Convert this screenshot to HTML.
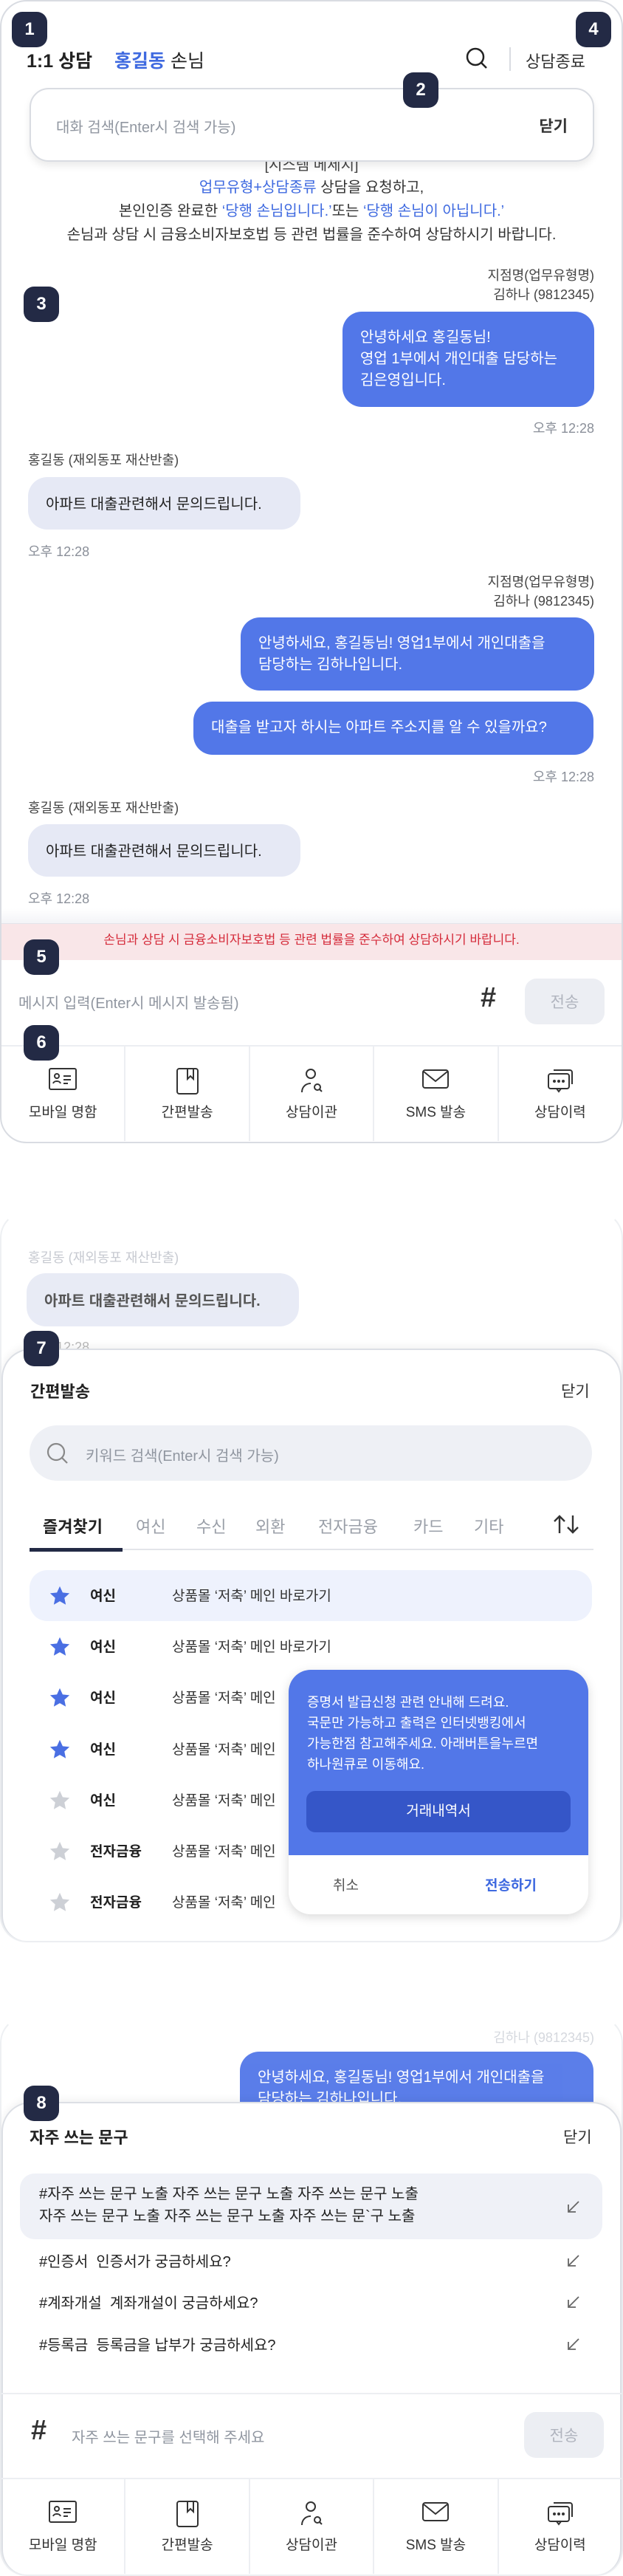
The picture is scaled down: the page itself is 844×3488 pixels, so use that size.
<!DOCTYPE html>
<html><head><meta charset="utf-8"><style>
*{margin:0;padding:0;box-sizing:border-box}
body{width:844px;height:3488px;position:relative;background:#fff;font-family:"Liberation Sans","Noto Sans CJK KR",sans-serif;color:#222;overflow:hidden}
.a{position:absolute;white-space:nowrap}
.frame{position:absolute;left:0;width:844px;border:2px solid #d9dce2;border-radius:36px;background:#fff;overflow:hidden}
.badge{position:absolute;width:48px;height:48px;border-radius:14px;background:#232a45;color:#fff;font-size:24px;font-weight:bold;display:flex;align-items:center;justify-content:center;z-index:20}
.bubble-b{position:absolute;background:#5277e8;color:#fff;border-radius:26px;font-size:20px;line-height:29px;padding:0 0 0 24px}
.bubble-g{position:absolute;background:#e6e9f5;color:#222;border-radius:26px;font-size:20px}
.time{font-size:18px;color:#8a8f99}
.nav{position:absolute;left:0;width:840px;height:130px;border-top:2px solid #eceef2;display:flex}
.nav div{flex:1;border-right:2px solid #eceef2;position:relative;text-align:center}
.nav div:last-child{border-right:none}
.nav svg{position:absolute;left:50%;transform:translateX(-50%);top:28px}
.nav span{position:absolute;left:0;right:0;top:74px;font-size:19px;color:#333}
.send{position:absolute;width:108px;height:62px;border-radius:16px;background:#eceef3;color:#b0b4be;font-size:21px;display:flex;align-items:center;justify-content:center}
.row{position:absolute;left:40px;width:762px;height:69px}
.row .cat{position:absolute;left:82px;top:20px;font-size:19px;font-weight:bold}
.row .tt{position:absolute;left:193px;top:20px;font-size:19px;color:#333}
.row svg{position:absolute;left:26px;top:20px}
.fr{position:absolute;left:27px;width:789px;font-size:20px;color:#222}
.fr svg{position:absolute;right:30px}
.hash{position:absolute;font-size:38px;font-weight:bold;color:#333}
</style></head><body>

<!-- FRAME 1 -->
<div class="frame" style="top:0;height:1548px"></div>
<div class="badge" style="left:16px;top:16px">1</div>
<div class="badge" style="left:780px;top:16px">4</div>
<div class="a" style="left:36px;top:63px;font-size:25px;font-weight:bold">1:1 상담</div>
<div class="a" style="left:155px;top:63px;font-size:25px"><b style="color:#3f6ae0">홍길동</b> 손님</div>
<svg class="a" style="left:630px;top:63px" width="32" height="32" viewBox="0 0 32 32"><circle cx="14" cy="14" r="11" fill="none" stroke="#222" stroke-width="2.5"/><line x1="22" y1="22" x2="29" y2="29" stroke="#222" stroke-width="2.5"/></svg>
<div class="a" style="left:690px;top:64px;width:2px;height:32px;background:#d9dce2"></div>
<div class="a" style="left:712px;top:66px;font-size:22px;color:#333">상담종료</div>

<div class="a" style="left:0;top:207px;width:844px;text-align:center;font-size:20px;color:#444">[시스템 메세지]</div>
<div class="a" style="left:0;top:238px;width:844px;text-align:center;font-size:20px;line-height:32px;color:#333">
<span style="color:#3f6ae0">업무유형+상담종류</span> 상담을 요청하고,<br>
본인인증 완료한 <span style="color:#3f6ae0">‘당행 손님입니다.’</span>또는 <span style="color:#3f6ae0">‘당행 손님이 아닙니다.’</span><br>
손님과 상담 시 금융소비자보호법 등 관련 법률을 준수하여 상담하시기 바랍니다.</div>

<div class="a" style="left:40px;top:119px;width:765px;height:100px;border:2px solid #d9dce2;border-radius:26px;background:#fff;box-shadow:0 6px 10px rgba(0,0,0,.08);z-index:5">
<div class="a" style="left:34px;top:35px;font-size:20px;color:#9096a0">대화 검색(Enter시 검색 가능)</div>
<div class="a" style="right:34px;top:34px;font-size:21px;font-weight:bold;color:#333">닫기</div>
</div>
<div class="badge" style="left:546px;top:98px">2</div>
<div class="badge" style="left:32px;top:388px">3</div>

<div class="a" style="right:39px;top:360px;font-size:18px;color:#444;text-align:right;line-height:26px">지점명(업무유형명)<br>김하나 (9812345)</div>
<div class="bubble-b" style="left:464px;top:422px;width:341px;height:129px;padding-top:21px">안녕하세요 홍길동님!<br>영업 1부에서 개인대출 담당하는<br>김은영입니다.</div>
<div class="a time" style="right:39px;top:566px">오후 12:28</div>

<div class="a" style="left:38px;top:609px;font-size:18px;color:#444">홍길동 (재외동포 재산반출)</div>
<div class="bubble-g" style="left:38px;top:646px;width:369px;height:71px;padding:20px 0 0 24px">아파트 대출관련해서 문의드립니다.</div>
<div class="a time" style="left:38px;top:733px">오후 12:28</div>

<div class="a" style="right:39px;top:775px;font-size:18px;color:#444;text-align:right;line-height:26px">지점명(업무유형명)<br>김하나 (9812345)</div>
<div class="bubble-b" style="left:326px;top:836px;width:479px;height:99px;padding-top:21px">안녕하세요, 홍길동님! 영업1부에서 개인대출을<br>담당하는 김하나입니다.</div>
<div class="bubble-b" style="left:262px;top:950px;width:542px;height:72px;padding-top:21px">대출을 받고자 하시는 아파트 주소지를 알 수 있을까요?</div>
<div class="a time" style="right:39px;top:1038px">오후 12:28</div>
<div class="a" style="left:38px;top:1080px;font-size:18px;color:#444">홍길동 (재외동포 재산반출)</div>
<div class="bubble-g" style="left:38px;top:1116px;width:369px;height:71px;padding:20px 0 0 24px">아파트 대출관련해서 문의드립니다.</div>
<div class="a time" style="left:38px;top:1203px">오후 12:28</div>

<div class="a" style="left:2px;top:1230px;width:840px;height:20px;background:linear-gradient(#fff,#f3f4f7)"></div>
<div class="a" style="left:2px;top:1250px;width:840px;height:50px;background:#f9e6e8;border-top:1px solid #e3e5ea;text-align:center;font-size:17px;color:#d52b3a;line-height:44px">손님과 상담 시 금융소비자보호법 등 관련 법률을 준수하여 상담하시기 바랍니다.</div>
<div class="badge" style="left:32px;top:1272px">5</div>
<div class="a" style="left:25px;top:1342px;font-size:20px;color:#9096a0">메시지 입력(Enter시 메시지 발송됨)</div>
<div class="hash" style="left:651px;top:1330px">#</div>
<div class="send" style="left:711px;top:1325px">전송</div>
<div class="badge" style="left:32px;top:1388px">6</div>

<div class="nav" style="top:1415px;left:2px">
<div><svg width="40" height="32" viewBox="0 0 40 32" fill="none" stroke="#333" stroke-width="2"><rect x="2" y="2" width="36" height="28" rx="2"/><circle cx="12" cy="12" r="3"/><path d="M7 22c1-4 9-4 10 0M21 12h10M21 17h10M21 22h6"/></svg><span>모바일 명함</span></div>
<div><svg width="32" height="38" viewBox="0 0 32 38" fill="none" stroke="#333" stroke-width="2"><rect x="2" y="2" width="28" height="34" rx="3"/><path d="M16 2v14l4-4 4 4V2"/></svg><span>간편발송</span></div>
<div><svg width="32" height="36" viewBox="0 0 32 36" fill="none" stroke="#333" stroke-width="2"><circle cx="15" cy="9" r="6"/><path d="M3 34c0-8 6-12 12-12"/><circle cx="24" cy="27" r="4"/><path d="M27 30l3 3"/></svg><span>상담이관</span></div>
<div><svg width="38" height="32" viewBox="0 0 38 32" fill="none" stroke="#333" stroke-width="2"><rect x="2" y="4" width="34" height="24" rx="3"/><path d="M3 6l16 13 16-13"/></svg><span>SMS 발송</span></div>
<div><svg width="36" height="36" viewBox="0 0 36 36" fill="none" stroke="#333" stroke-width="2"><path d="M9 4h22a3 3 0 0 1 3 3v16"/><rect x="2" y="9" width="28" height="20" rx="3"/><path d="M13 29l3 4 3-4"/><circle cx="10" cy="19" r="1" fill="#333"/><circle cx="16" cy="19" r="1" fill="#333"/><circle cx="22" cy="19" r="1" fill="#333"/></svg><span>상담이력</span></div>
</div>

<!-- FRAME 2 -->
<div class="frame" style="top:1640px;height:990px;border-color:#eef0f3;border-top-color:#fff"></div>
<div class="a" style="left:38px;top:1689px;font-size:18px;color:#c7cad1">홍길동 (재외동포 재산반출)</div>
<div class="bubble-g" style="left:36px;top:1724px;width:369px;height:72px;padding:21px 0 0 24px;opacity:.9;font-weight:bold;color:#444">아파트 대출관련해서 문의드립니다.</div>
<div class="a time" style="left:38px;top:1810px;color:#bbb">오후 12:28</div>
<div class="a" style="left:2px;top:1826px;width:840px;height:802px;background:#fff;border:2px solid #dcdfe5;border-bottom:none;border-radius:40px 40px 34px 34px;box-shadow:0 -4px 10px rgba(0,0,0,.05)"></div>
<div class="badge" style="left:32px;top:1802px">7</div>
<div class="a" style="left:41px;top:1867px;font-size:22px;font-weight:bold">간편발송</div>
<div class="a" style="left:760px;top:1868px;font-size:21px;color:#333">닫기</div>
<div class="a" style="left:40px;top:1930px;width:762px;height:75px;border-radius:38px;background:#eef0f5"></div>
<svg class="a" style="left:63px;top:1953px" width="30" height="30" viewBox="0 0 30 30" fill="none" stroke="#888" stroke-width="2.2"><circle cx="13" cy="13" r="11"/><path d="M21 21l7 7"/></svg>
<div class="a" style="left:116px;top:1955px;font-size:20px;color:#9096a0">키워드 검색(Enter시 검색 가능)</div>
<div class="a" style="left:40px;top:2097px;width:764px;height:2px;background:#e3e5ea"></div>
<div class="a" style="left:40px;top:2096px;width:126px;height:5px;background:#232a45"></div>
<div class="a" style="left:58px;top:2050px;font-size:22px;font-weight:bold">즐겨찾기</div>
<div class="a" style="left:184px;top:2050px;font-size:22px;color:#9a9fa8">여신</div>
<div class="a" style="left:266px;top:2050px;font-size:22px;color:#9a9fa8">수신</div>
<div class="a" style="left:346px;top:2050px;font-size:22px;color:#9a9fa8">외환</div>
<div class="a" style="left:431px;top:2050px;font-size:22px;color:#9a9fa8">전자금융</div>
<div class="a" style="left:560px;top:2050px;font-size:22px;color:#9a9fa8">카드</div>
<div class="a" style="left:642px;top:2050px;font-size:22px;color:#9a9fa8">기타</div>
<svg class="a" style="left:748px;top:2050px" width="38" height="28" viewBox="0 0 38 28" fill="none" stroke="#333" stroke-width="2.4"><path d="M10 26V3M3 10l7-7 7 7M28 2v23M21 18l7 7 7-7"/></svg>

<div class="row" style="top:2126px;background:#eef2fd;border-radius:24px"><svg width="30" height="30" viewBox="0 0 24 24"><path d="M12 1.5l3.1 6.8 7.4.8-5.5 5 1.5 7.3L12 17.7l-6.5 3.7L7 14.1 1.5 9.1l7.4-.8z" fill="#4a6fe3"/></svg><div class="cat">여신</div><div class="tt">상품몰 ‘저축’ 메인 바로가기</div></div>
<div class="row" style="top:2195px"><svg width="30" height="30" viewBox="0 0 24 24"><path d="M12 1.5l3.1 6.8 7.4.8-5.5 5 1.5 7.3L12 17.7l-6.5 3.7L7 14.1 1.5 9.1l7.4-.8z" fill="#4a6fe3"/></svg><div class="cat">여신</div><div class="tt">상품몰 ‘저축’ 메인 바로가기</div></div>
<div class="row" style="top:2264px"><svg width="30" height="30" viewBox="0 0 24 24"><path d="M12 1.5l3.1 6.8 7.4.8-5.5 5 1.5 7.3L12 17.7l-6.5 3.7L7 14.1 1.5 9.1l7.4-.8z" fill="#4a6fe3"/></svg><div class="cat">여신</div><div class="tt">상품몰 ‘저축’ 메인</div></div>
<div class="row" style="top:2334px"><svg width="30" height="30" viewBox="0 0 24 24"><path d="M12 1.5l3.1 6.8 7.4.8-5.5 5 1.5 7.3L12 17.7l-6.5 3.7L7 14.1 1.5 9.1l7.4-.8z" fill="#4a6fe3"/></svg><div class="cat">여신</div><div class="tt">상품몰 ‘저축’ 메인</div></div>
<div class="row" style="top:2403px"><svg width="30" height="30" viewBox="0 0 24 24"><path d="M12 1.5l3.1 6.8 7.4.8-5.5 5 1.5 7.3L12 17.7l-6.5 3.7L7 14.1 1.5 9.1l7.4-.8z" fill="#cdd0d6"/></svg><div class="cat">여신</div><div class="tt">상품몰 ‘저축’ 메인</div></div>
<div class="row" style="top:2472px"><svg width="30" height="30" viewBox="0 0 24 24"><path d="M12 1.5l3.1 6.8 7.4.8-5.5 5 1.5 7.3L12 17.7l-6.5 3.7L7 14.1 1.5 9.1l7.4-.8z" fill="#cdd0d6"/></svg><div class="cat">전자금융</div><div class="tt">상품몰 ‘저축’ 메인</div></div>
<div class="row" style="top:2541px"><svg width="30" height="30" viewBox="0 0 24 24"><path d="M12 1.5l3.1 6.8 7.4.8-5.5 5 1.5 7.3L12 17.7l-6.5 3.7L7 14.1 1.5 9.1l7.4-.8z" fill="#cdd0d6"/></svg><div class="cat">전자금융</div><div class="tt">상품몰 ‘저축’ 메인</div></div>

<div class="a" style="left:391px;top:2261px;width:406px;height:331px;border-radius:30px;overflow:hidden;background:#fff;box-shadow:0 4px 14px rgba(0,0,0,.15);z-index:10">
<div class="a" style="left:0;top:0;width:406px;height:251px;background:#5277e8"></div>
<div class="a" style="left:25px;top:30px;font-size:18px;line-height:28px;color:#fff">증명서 발급신청 관련 안내해 드려요.<br>국문만 가능하고 출력은 인터넷뱅킹에서<br>가능한점 참고해주세요. 아래버튼을누르면<br>하나원큐로 이동해요.</div>
<div class="a" style="left:24px;top:164px;width:358px;height:56px;border-radius:12px;background:#3556c8;color:#fff;font-size:19px;text-align:center;line-height:56px">거래내역서</div>
<div class="a" style="left:60px;top:277px;font-size:19px;color:#555">취소</div>
<div class="a" style="left:266px;top:277px;font-size:19px;color:#3f6ae0;font-weight:bold">전송하기</div>
</div>

<!-- FRAME 3 -->
<div class="frame" style="top:2730px;height:758px;border-color:#eef0f3;border-top-color:#fff"></div>
<div class="a" style="right:39px;top:2745px;font-size:18px;color:#d5d8de">김하나 (9812345)</div>
<div class="bubble-b" style="left:325px;top:2778px;width:479px;height:99px;padding-top:21px;opacity:.95">안녕하세요, 홍길동님! 영업1부에서 개인대출을<br>담당하는 김하나입니다.</div>
<div class="a" style="left:2px;top:2846px;width:840px;height:640px;background:#fff;border:2px solid #dcdfe5;border-bottom:none;border-radius:40px 40px 34px 34px;box-shadow:0 -4px 10px rgba(0,0,0,.05)"></div>
<div class="badge" style="left:32px;top:2824px">8</div>
<div class="a" style="left:40px;top:2877px;font-size:22px;font-weight:bold">자주 쓰는 문구</div>
<div class="a" style="left:763px;top:2878px;font-size:21px;color:#333">닫기</div>
<div class="fr" style="top:2943px;height:89px;background:#eff1f7;border-radius:20px"><div class="a" style="left:26px;top:13px;line-height:30px">#자주 쓰는 문구 노출 자주 쓰는 문구 노출 자주 쓰는 문구 노출<br>자주 쓰는 문구 노출 자주 쓰는 문구 노출 자주 쓰는 문`구 노출</div><svg style="top:36px" width="18" height="18" viewBox="0 0 18 18" fill="none" stroke="#666" stroke-width="1.8"><path d="M16 2L2 16M2 6v10h10"/></svg></div>
<div class="fr" style="top:3044px;height:34px"><div class="a" style="left:26px;top:2px">#인증서 &nbsp;인증서가 궁금하세요?</div><svg style="top:8px" width="18" height="18" viewBox="0 0 18 18" fill="none" stroke="#666" stroke-width="1.8"><path d="M16 2L2 16M2 6v10h10"/></svg></div>
<div class="fr" style="top:3100px;height:34px"><div class="a" style="left:26px;top:2px">#계좌개설 &nbsp;계좌개설이 궁금하세요?</div><svg style="top:8px" width="18" height="18" viewBox="0 0 18 18" fill="none" stroke="#666" stroke-width="1.8"><path d="M16 2L2 16M2 6v10h10"/></svg></div>
<div class="fr" style="top:3157px;height:34px"><div class="a" style="left:26px;top:2px">#등록금 &nbsp;등록금을 납부가 궁금하세요?</div><svg style="top:8px" width="18" height="18" viewBox="0 0 18 18" fill="none" stroke="#666" stroke-width="1.8"><path d="M16 2L2 16M2 6v10h10"/></svg></div>
<div class="a" style="left:2px;top:3240px;width:840px;height:2px;background:#eceef2"></div>
<div class="hash" style="left:42px;top:3270px">#</div>
<div class="a" style="left:97px;top:3284px;font-size:20px;color:#9096a0">자주 쓰는 문구를 선택해 주세요</div>
<div class="send" style="left:710px;top:3266px">전송</div>
<div class="nav" style="top:3355px;left:2px">
<div><svg width="40" height="32" viewBox="0 0 40 32" fill="none" stroke="#333" stroke-width="2"><rect x="2" y="2" width="36" height="28" rx="2"/><circle cx="12" cy="12" r="3"/><path d="M7 22c1-4 9-4 10 0M21 12h10M21 17h10M21 22h6"/></svg><span>모바일 명함</span></div>
<div><svg width="32" height="38" viewBox="0 0 32 38" fill="none" stroke="#333" stroke-width="2"><rect x="2" y="2" width="28" height="34" rx="3"/><path d="M16 2v14l4-4 4 4V2"/></svg><span>간편발송</span></div>
<div><svg width="32" height="36" viewBox="0 0 32 36" fill="none" stroke="#333" stroke-width="2"><circle cx="15" cy="9" r="6"/><path d="M3 34c0-8 6-12 12-12"/><circle cx="24" cy="27" r="4"/><path d="M27 30l3 3"/></svg><span>상담이관</span></div>
<div><svg width="38" height="32" viewBox="0 0 38 32" fill="none" stroke="#333" stroke-width="2"><rect x="2" y="4" width="34" height="24" rx="3"/><path d="M3 6l16 13 16-13"/></svg><span>SMS 발송</span></div>
<div><svg width="36" height="36" viewBox="0 0 36 36" fill="none" stroke="#333" stroke-width="2"><path d="M9 4h22a3 3 0 0 1 3 3v16"/><rect x="2" y="9" width="28" height="20" rx="3"/><path d="M13 29l3 4 3-4"/><circle cx="10" cy="19" r="1" fill="#333"/><circle cx="16" cy="19" r="1" fill="#333"/><circle cx="22" cy="19" r="1" fill="#333"/></svg><span>상담이력</span></div>
</div>
</body></html>
